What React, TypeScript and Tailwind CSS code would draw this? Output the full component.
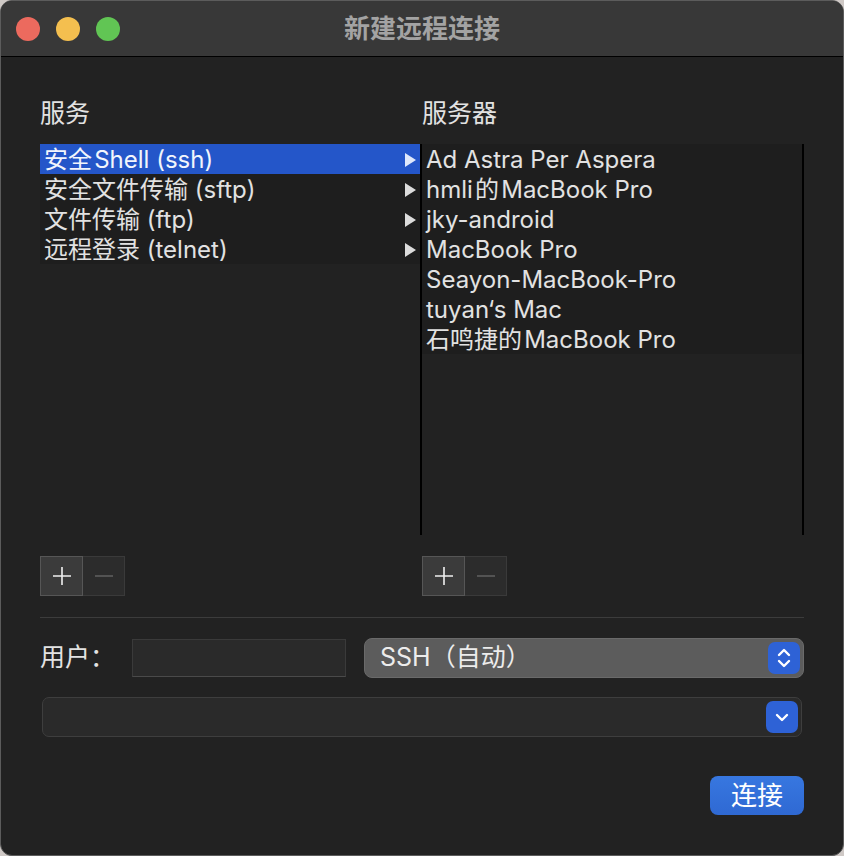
const services = ["安全\u200AShell (ssh)", "安全文件传输 (sftp)", "文件传输 (ftp)", "远程登录 (telnet)"];
const servers = [
  "Ad Astra Per Aspera",
  "hmli\u200A的\u200AMacBook Pro",
  "jky-android",
  "MacBook Pro",
  "Seayon-MacBook-Pro",
  "tuyan‘s Mac",
  "石鸣捷的\u200AMacBook Pro",
];

function Arrow({ selected }: { selected?: boolean }) {
  return (
    <svg width="11" height="14" viewBox="0 0 11 14" className="shrink-0">
      <polygon points="0,0 11,7 0,14" fill={selected ? "#dfe8fb" : "#dcdcdc"} />
    </svg>
  );
}

function PlusMinus() {
  return (
    <div className="flex h-[40px]">
      <div className="flex h-full w-[43px] items-center justify-center border border-[#565656] bg-[#3b3b3b]">
        <svg width="20" height="20" viewBox="0 0 20 20">
          <path d="M10 1v18M1 10h18" stroke="#f0f0f0" strokeWidth="1.6" />
        </svg>
      </div>
      <div className="flex h-full w-[42px] items-center justify-center border border-l-0 border-[#3a3a3a] bg-[#2c2c2c]">
        <svg width="20" height="20" viewBox="0 0 20 20">
          <path d="M1 10h18" stroke="#5e5e5e" strokeWidth="1.6" />
        </svg>
      </div>
    </div>
  );
}

export default function App() {
  return (
    <div className="h-[856px] w-[844px] bg-[#cfc9c6] font-['Inter','Noto_Sans_CJK_SC',sans-serif]">
      <div className="flex h-full w-full flex-col overflow-hidden rounded-[12px] border border-[#5c5c5c] bg-[#222222]">
        {/* Title bar */}
        <div className="relative flex h-[56px] shrink-0 items-center border-b border-black bg-[#383838]">
          <div className="ml-[15px] flex gap-[16px]">
            <div className="h-[24px] w-[24px] rounded-full bg-[#ec6a5e]" />
            <div className="h-[24px] w-[24px] rounded-full bg-[#f4bf4f]" />
            <div className="h-[24px] w-[24px] rounded-full bg-[#61c554]" />
          </div>
          <div className="absolute inset-0 flex items-center justify-center text-[26px] font-bold text-[#a3a3a3]">
            新建远程连接
          </div>
        </div>

        {/* Body */}
        <div className="flex flex-col px-[39px] pt-[40px]">
          <div className="flex">
            {/* Services */}
            <div className="flex w-[380px] flex-col">
              <div className="h-[32px] text-[25px] leading-[32px] text-[#e2e2e2]">服务</div>
              <div className="mt-[15px] h-[391px]">
                {services.map((s, i) => (
                  <div
                    key={s}
                    className={`flex h-[30px] items-center justify-between pl-[4px] pr-[4px] pt-[2px] text-[24px] ${
                      i === 0 ? "bg-[#2456c9] text-[#f2f5fc]" : "bg-[#1e1e1e] text-[#e2e2e2]"
                    }`}
                  >
                    <span>{s}</span>
                    <Arrow selected={i === 0} />
                  </div>
                ))}
              </div>
              <div className="mt-[21px]">
                <PlusMinus />
              </div>
            </div>

            {/* Servers */}
            <div className="flex w-[384px] flex-col">
              <div className="h-[32px] pl-[2px] text-[25px] leading-[32px] text-[#e2e2e2]">服务器</div>
              <div className="mt-[15px] h-[391px] border-x-2 border-black">
                {servers.map((s) => (
                  <div key={s} className="flex h-[30px] items-center bg-[#1e1e1e] pl-[4px] pt-[2px] text-[24px] text-[#e2e2e2]">
                    {s}
                  </div>
                ))}
              </div>
              <div className="mt-[21px] pl-[2px]">
                <PlusMinus />
              </div>
            </div>
          </div>

          <div className="mt-[21px] h-px bg-[#3c3c3c]" />

          {/* User row */}
          <div className="mt-[20px] flex h-[40px] items-center">
            <div className="w-[92px] text-[25px] text-[#e2e2e2]">用户：</div>
            <div className="h-[38px] w-[214px] border border-[#3a3a3a] border-b-[#4a4a4a] bg-[#2a2a2a]" />
            <div className="ml-[18px] flex h-[40px] flex-1 items-center justify-between rounded-[8px] border border-[#6a6a6a] bg-[#5c5c5c] pl-[15px] pr-[3px]">
              <span className="text-[25px] text-[#ececec]">SSH（自动）</span>
              <div className="flex h-[32px] w-[32px] items-center justify-center rounded-[7px] bg-[#2e62d6]">
                <svg width="16" height="24" viewBox="0 0 16 24">
                  <path d="M3 9l5-5 5 5M3 15l5 5 5-5" fill="none" stroke="#ffffff" strokeWidth="2.4" strokeLinecap="round" strokeLinejoin="round" />
                </svg>
              </div>
            </div>
          </div>

          {/* Combo */}
          <div className="mx-[2px] mt-[19px] flex h-[40px] items-center justify-end rounded-[7px] border border-[#3e3e3e] bg-[#2a2a2a] pr-[3px]">
            <div className="flex h-[32px] w-[32px] items-center justify-center rounded-[7px] bg-[#2e62d6]">
              <svg width="16" height="16" viewBox="0 0 16 16">
                <path d="M3 6l5 5 5-5" fill="none" stroke="#ffffff" strokeWidth="2.4" strokeLinecap="round" strokeLinejoin="round" />
              </svg>
            </div>
          </div>

          {/* Connect */}
          <div className="mt-[39px] flex justify-end">
            <div className="flex h-[39px] w-[94px] items-center justify-center rounded-[8px] bg-gradient-to-b from-[#3777e0] to-[#2f69d3] text-[26px] text-white">
              连接
            </div>
          </div>
        </div>
      </div>
    </div>
  );
}
